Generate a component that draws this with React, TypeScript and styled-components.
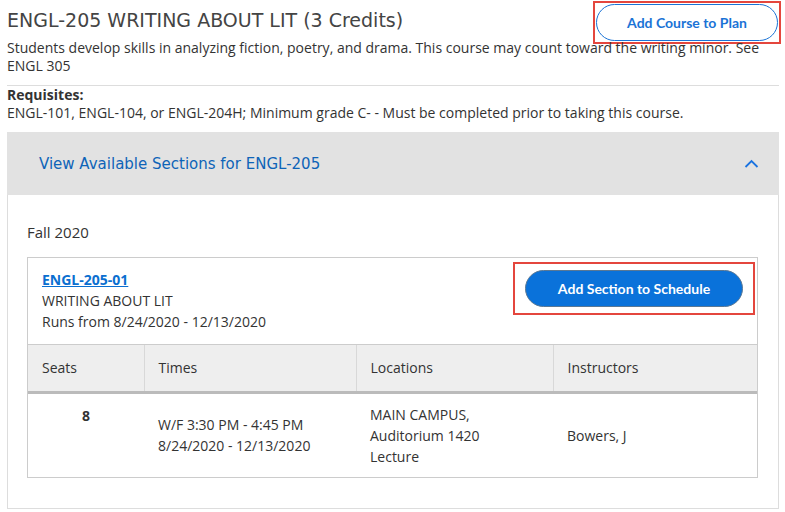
import React from 'react';
import styled, {createGlobalStyle} from 'styled-components';

const GlobalStyle = createGlobalStyle`
    body {
        margin: 0;
        background: #fff;
        font-family: "Open Sans", "Liberation Sans", sans-serif;
        color: #333;
    }
`;

const headingFont = '"DejaVu Sans", "Open Sans", sans-serif';
const buttonFont = 'Lato, "Open Sans", sans-serif';

interface Meeting {
    seats: number;
    times: string[];
    locations: string[];
    instructor: string;
}

const meeting: Meeting = {
    seats: 8,
    times: ['W/F 3:30 PM - 4:45 PM', '8/24/2020 - 12/13/2020'],
    locations: ['MAIN CAMPUS,', 'Auditorium 1420', 'Lecture'],
    instructor: 'Bowers, J',
};

const ChevronUp = () => (
    <svg width='15' height='9' viewBox='0 0 15 9' fill='none'>
        <path d='M1.5 8L7.5 2L13.5 8' stroke='#1a73e0' strokeWidth='1.8'/>
    </svg>
);

const App = () => (
    <Page>
        <GlobalStyle/>
        <TitleRow>
            <Title>{'ENGL-205 WRITING ABOUT LIT (3 Credits)'}</Title>
            <Highlight $v={1} $h={1}>
                <PlanButton>{'Add Course to Plan'}</PlanButton>
            </Highlight>
        </TitleRow>
        <Description>
            {'Students develop skills in analyzing fiction, poetry, and drama. This course may count toward the writing minor. See ENGL 305'}
        </Description>
        <Requisites>
            <Bold>{'Requisites:'}</Bold>
            <div>{'ENGL-101, ENGL-104, or ENGL-204H; Minimum grade C- - Must be completed prior to taking this course.'}</div>
        </Requisites>
        <Accordion>
            <AccordionHeader>
                <AccordionTitle>{'View Available Sections for ENGL-205'}</AccordionTitle>
                <ChevronUp/>
            </AccordionHeader>
            <AccordionBody>
                <Term>{'Fall 2020'}</Term>
                <SectionCard>
                    <CardTop>
                        <CardInfo>
                            <SectionLink href='#'>{'ENGL-205-01'}</SectionLink>
                            <div>{'WRITING ABOUT LIT'}</div>
                            <div>{'Runs from 8/24/2020 - 12/13/2020'}</div>
                        </CardInfo>
                        <Highlight $v={6} $h={10}>
                            <ScheduleButton>{'Add Section to Schedule'}</ScheduleButton>
                        </Highlight>
                    </CardTop>
                    <Table>
                        <colgroup>
                            <col style={{width: 116}}/>
                            <col style={{width: 212}}/>
                            <col style={{width: 197}}/>
                            <col/>
                        </colgroup>
                        <thead>
                            <tr>
                                <HeadCell>{'Seats'}</HeadCell>
                                <HeadCell>{'Times'}</HeadCell>
                                <HeadCell>{'Locations'}</HeadCell>
                                <HeadCell>{'Instructors'}</HeadCell>
                            </tr>
                        </thead>
                        <tbody>
                            <tr>
                                <SeatsCell>{meeting.seats}</SeatsCell>
                                <BodyCell>{meeting.times.map((t) => <div key={t}>{t}</div>)}</BodyCell>
                                <BodyCell>{meeting.locations.map((l) => <div key={l}>{l}</div>)}</BodyCell>
                                <BodyCell>{meeting.instructor}</BodyCell>
                            </tr>
                        </tbody>
                    </Table>
                </SectionCard>
            </AccordionBody>
        </Accordion>
    </Page>
);

const Page = styled.div`
    width: 772px;
    padding: 0 6px 0 7px;
    font-size: 14px;
    line-height: 18px;
`;

const TitleRow = styled.div`
    display: flex;
    align-items: flex-start;
    justify-content: space-between;
    height: 39px;
    margin-right: -2px;
`;

const Title = styled.h1`
    margin: 9px 0 0;
    font-family: ${headingFont};
    font-size: 19px;
    line-height: 22px;
    font-weight: 400;
    color: #444;
`;

const Highlight = styled.div<{$v: number; $h: number}>`
    display: flex;
    margin-top: 1px;
    padding: ${(p) => p.$v}px ${(p) => p.$h}px;
    border: 2px solid #e4463d;
`;

const PlanButton = styled.button`
    width: 182px;
    height: 37px;
    border: 1px solid #1a73d6;
    border-radius: 19px;
    background: #fff;
    color: #1a73d6;
    font-family: ${buttonFont};
    font-size: 14px;
    font-weight: 700;
`;

const Description = styled.div`
    padding-bottom: 10px;
    border-bottom: 1px solid #ddd;
`;

const Requisites = styled.div`
    padding-top: 0;
`;

const Bold = styled.div`
    font-weight: 700;
`;

const Accordion = styled.div`
    margin-top: 10px;
`;

const AccordionHeader = styled.div`
    display: flex;
    align-items: center;
    justify-content: space-between;
    height: 63px;
    padding: 0 20px 0 32px;
    background: #e2e2e2;
`;

const AccordionTitle = styled.span`
    font-family: ${headingFont};
    font-size: 15px;
    color: #0e64b8;
`;

const AccordionBody = styled.div`
    border: 1px solid #ddd;
    border-top: none;
    padding: 28px 20px 30px 19px;
`;

const Term = styled.div`
    font-size: 15px;
    margin-bottom: 16px;
`;

const SectionCard = styled.div`
    border: 1px solid #ccc;
`;

const CardTop = styled.div`
    display: flex;
    justify-content: space-between;
    align-items: flex-start;
    padding: 3px 2px 12px 14px;
    line-height: 21px;
`;

const CardInfo = styled.div`
    padding-top: 8px;
`;

const SectionLink = styled.a`
    color: #0b6fd0;
    font-weight: 700;
    text-decoration: underline;
`;

const ScheduleButton = styled.button`
    width: 218px;
    height: 37px;
    border: 1px solid #5a7894;
    border-radius: 19px;
    background: #0a72da;
    color: #fff;
    font-family: ${buttonFont};
    font-size: 14px;
    font-weight: 700;
`;

const Table = styled.table`
    width: 100%;
    border-collapse: collapse;
    table-layout: fixed;
`;

const HeadCell = styled.th`
    height: 46px;
    padding: 0 14px;
    background: #eee;
    border-top: 1px solid #ccc;
    border-left: 1px solid #d8d8d8;
    border-bottom: 3px solid #bbb;
    text-align: left;
    font-weight: 400;

    &:first-child {
        border-left: none;
    }
`;

const BodyCell = styled.td`
    box-sizing: border-box;
    height: 84px;
    padding: 0 14px;
    line-height: 21px;
    vertical-align: middle;
`;

const SeatsCell = styled(BodyCell)`
    vertical-align: top;
    padding-top: 11px;
    text-align: center;
    font-weight: 700;
`;

export default App;
